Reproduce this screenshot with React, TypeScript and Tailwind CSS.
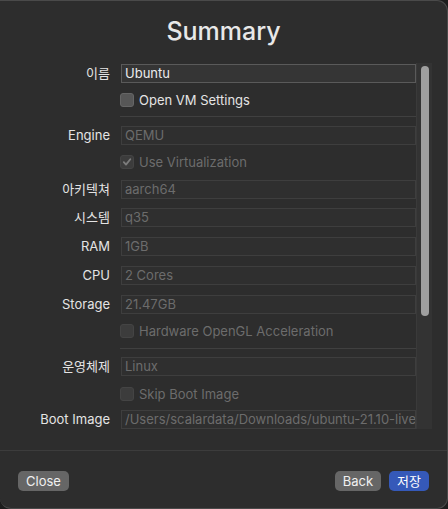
import type { ReactNode } from 'react'

const font = { fontFamily: 'Inter, "Noto Sans CJK KR", sans-serif' }

type FieldRowProps = {
  label: string
  value: string
  enabled?: boolean
  className?: string
}

function FieldRow({ label, value, enabled = false, className = '' }: FieldRowProps) {
  return (
    <div className={`flex items-center ${className}`}>
      <div className="w-[110px] shrink-0 text-right text-[13px] leading-[19px] text-[#e4e4e4]">
        {label}
      </div>
      <div
        className={
          enabled
            ? 'ml-[11px] h-[19px] flex-1 overflow-hidden whitespace-nowrap border border-[#5a5a5a] bg-[#353535] pl-[3px] text-[13px] leading-[17px] text-[#ececec]'
            : 'ml-[11px] h-[19px] flex-1 overflow-hidden whitespace-nowrap border border-[#3e3e3e] bg-[#2f2f2f] pl-[3px] text-[13px] leading-[17px] text-[#6c6c6c]'
        }
      >
        {value}
      </div>
    </div>
  )
}

type CheckRowProps = {
  label: string
  checked?: boolean
  enabled?: boolean
  className?: string
}

function CheckRow({ label, checked = false, enabled = false, className = '' }: CheckRowProps) {
  return (
    <div className={`flex h-[14px] items-center pl-[120px] ${className}`}>
      <span
        className={
          enabled
            ? 'flex h-[14px] w-[14px] items-center justify-center rounded-[3px] border border-[#666] bg-[#575757]'
            : 'flex h-[14px] w-[14px] items-center justify-center rounded-[3px] border border-[#444] bg-[#3c3c3c]'
        }
      >
        {checked ? (
          <svg width="10" height="10" viewBox="0 0 10 10">
            <path d="M1.8 5.2 L4 7.6 L8.3 2.2" fill="none" stroke="#7c7c7c" strokeWidth="1.8" strokeLinecap="round" strokeLinejoin="round" />
          </svg>
        ) : null}
      </span>
      <span
        className={
          enabled
            ? 'ml-[5px] text-[13px] leading-[14px] text-[#e4e4e4]'
            : 'ml-[5px] text-[13px] leading-[14px] text-[#6c6c6c]'
        }
      >
        {label}
      </span>
    </div>
  )
}

function Divider({ className = '' }: { className?: string }) {
  return <div className={`ml-[120px] h-px bg-[#404040] ${className}`} />
}

function Button({ children, primary = false }: { children: ReactNode; primary?: boolean }) {
  return (
    <button
      className={
        primary
          ? 'h-[20px] rounded-[5px] bg-[#3559b9] px-[8px] text-[13px] leading-[20px] text-white'
          : 'h-[20px] rounded-[5px] bg-[#666666] px-[8px] text-[13px] leading-[20px] text-[#f0f0f0]'
      }
    >
      {children}
    </button>
  )
}

export default function App() {
  return (
    <div className="h-[509px] w-[448px] bg-[#1d1d1d]" style={font}>
      <div className="flex h-[509px] w-[448px] flex-col rounded-tr-[11px] rounded-b-[11px] border-t border-r border-b border-[#4a4a4a] bg-[#2d2d2d]">
        <h1 className="pt-[14px] text-center text-[25px] font-medium leading-[32px] text-[#e8e8e8]">
          Summary
        </h1>

        <div className="mt-[16px] flex h-[366px] overflow-hidden">
          <div className="w-[416px] shrink-0">
            <FieldRow label="이름" value="Ubuntu" enabled className="mt-[1px]" />
            <CheckRow label="Open VM Settings" enabled className="mt-[10px]" />
            <Divider className="mt-[9px]" />
            <FieldRow label="Engine" value="QEMU" className="mt-[9px]" />
            <CheckRow label="Use Virtualization" checked className="mt-[10px]" />
            <FieldRow label="아키텍쳐" value="aarch64" className="mt-[11px]" />
            <FieldRow label="시스템" value="q35" className="mt-[9px]" />
            <FieldRow label="RAM" value="1GB" className="mt-[10px]" />
            <FieldRow label="CPU" value="2 Cores" className="mt-[10px]" />
            <FieldRow label="Storage" value="21.47GB" className="mt-[10px]" />
            <CheckRow label="Hardware OpenGL Acceleration" className="mt-[10px]" />
            <Divider className="mt-[10px]" />
            <FieldRow label="운영체제" value="Linux" className="mt-[8px]" />
            <CheckRow label="Skip Boot Image" className="mt-[11px]" />
            <FieldRow
              label="Boot Image"
              value="/Users/scalardata/Downloads/ubuntu-21.10-live-server-arm64.iso"
              className="mt-[9px]"
            />
          </div>
          <div className="w-[16px] shrink-0 border-l border-[#3a3a3a] bg-[#333333] pl-[4px] pt-[3px]">
            <div className="h-[250px] w-[8px] rounded-full bg-[#9f9f9f]" />
          </div>
        </div>

        <div className="mt-[21px] h-px bg-[#3c3c3c]" />

        <div className="mt-[20px] flex items-center px-[18px]">
          <Button>Close</Button>
          <div className="flex-1" />
          <Button>Back</Button>
          <div className="w-[8px]" />
          <Button primary>저장</Button>
        </div>
      </div>
    </div>
  )
}
